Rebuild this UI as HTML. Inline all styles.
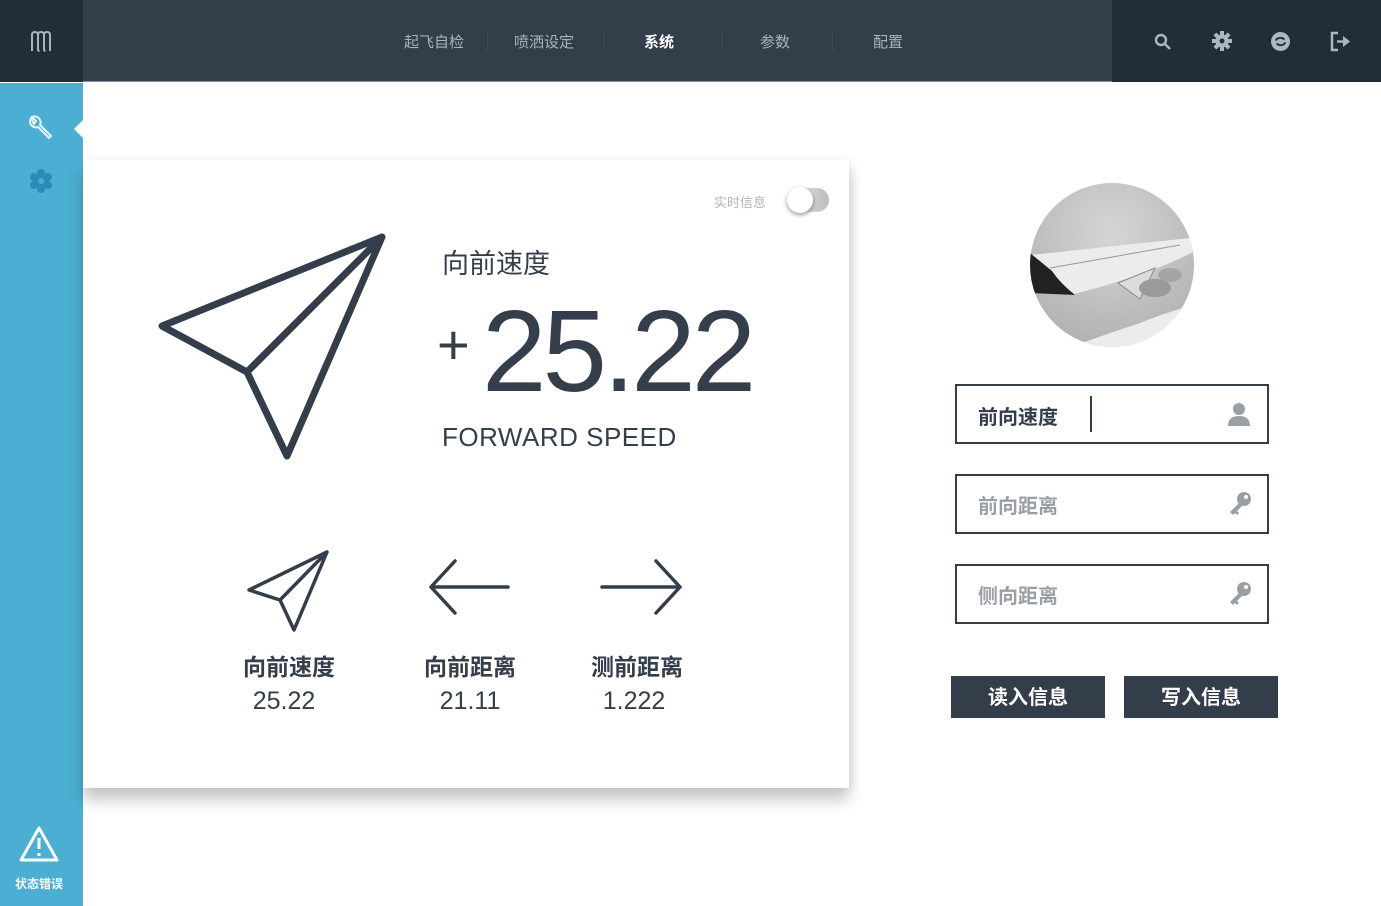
<!DOCTYPE html>
<html><head><meta charset="utf-8"><style>
*{margin:0;padding:0;box-sizing:border-box}
body{width:1381px;height:906px;background:#fff;position:relative;overflow:hidden;font-family:"Liberation Sans","Noto Sans CJK SC",sans-serif;color:#343f4b}
.abs{position:absolute}
#top{left:0;top:0;width:1381px;height:82px;background:#343e4b;border-bottom:1px solid #8a949e}
#logo{left:0;top:0;width:83px;height:82px;background:#232d39}
#rt{left:1112px;top:0;width:269px;height:82px;background:#232d39}
.nav{top:31px;font-size:15px;color:#a9b3bb}
.sep{top:31px;width:1px;height:20px;background:#3f4a57}
#side{left:0;top:83px;width:83px;height:823px;background:#4bafd3}
#card{left:83px;top:160px;width:766px;height:628px;background:#fff;box-shadow:0 12px 14px rgba(0,0,0,.22),4px 0 8px rgba(0,0,0,.05)}
.inp{left:955px;width:314px;height:60px;border:2px solid #343e4b;background:#fff}
.inp span{position:absolute;left:21px;top:14px;font-size:20px;color:#9a9fa5;font-weight:bold}
.btn{top:676px;width:154px;height:42px;background:#343e4b;color:#fff;font-size:20px;font-weight:bold;text-align:center;line-height:44px}
.lbl{font-size:23px;font-weight:bold;text-align:center;width:130px;color:#343f4b}
.val{font-size:25px;text-align:center;width:130px;color:#343f4b}
</style></head><body>
<div id="top" class="abs"></div>
<div id="logo" class="abs"><svg class="abs" style="left:30px;top:30px" width="22" height="22" viewBox="0 0 22 22" fill="none" stroke="#a9b3bb" stroke-width="2"><path d="M2 21V5q0-3 3-3t3 3v14q0 2 1.5 2M8 5q0-3 3-3t3 3v14q0 2 1.5 2M14 5q0-3 3-3t3 3v16"/></svg></div>
<div id="rt" class="abs">
<svg class="abs" style="left:42px;top:33px" width="18" height="18" viewBox="0 0 18 18" fill="none" stroke="#a9b8c2" stroke-width="2.4"><circle cx="7" cy="7" r="5"/><path d="M10.5 10.5L16 16"/></svg>
<svg class="abs" style="left:100px;top:31px" width="20" height="20" viewBox="-10 -10 20 20"><g fill="#a9b8c2"><circle r="6.5"/><rect x="-2" y="-10" width="4" height="20"/><rect x="-2" y="-10" width="4" height="20" transform="rotate(45)"/><rect x="-2" y="-10" width="4" height="20" transform="rotate(90)"/><rect x="-2" y="-10" width="4" height="20" transform="rotate(135)"/></g><circle r="2.5" fill="#232d39"/></svg>
<svg class="abs" style="left:159px;top:32px" width="19" height="19" viewBox="0 0 20 20"><circle cx="10" cy="10" r="10" fill="#a9b8c2"/><path d="M5 9a5 4 0 0 1 9-1M15 11a5 4 0 0 1-9 1" fill="none" stroke="#232d39" stroke-width="2"/></svg>
<svg class="abs" style="left:218px;top:31px" width="22" height="21" viewBox="0 0 22 21" fill="none" stroke="#a9b8c2" stroke-width="2.4"><path d="M8 2H2v17h6"/><path d="M7 10.5h9" /><path d="M13 5l7 5.5-7 5.5z" fill="#a9b8c2" stroke="none"/></svg>
</div>
<div class="abs nav" style="left:404px">起飞自检</div>
<div class="abs sep" style="left:487px"></div>
<div class="abs nav" style="left:514px">喷洒设定</div>
<div class="abs sep" style="left:604px"></div>
<div class="abs nav" style="left:644px;color:#fff;font-weight:bold">系统</div>
<div class="abs sep" style="left:722px"></div>
<div class="abs nav" style="left:760px">参数</div>
<div class="abs sep" style="left:832px"></div>
<div class="abs nav" style="left:873px">配置</div>

<div id="side" class="abs">
<svg class="abs" style="left:27px;top:32px" width="26" height="26" viewBox="0 0 26 26"><path d="M4 3a6 6 0 0 0 7 9l11 11 2-2-11-11a6 6 0 0 0-8-8l4 4-2 3z" fill="none" stroke="#e6f4fa" stroke-width="2"/></svg>
<div class="abs" style="left:74px;top:37px;width:0;height:0;border-top:9px solid transparent;border-bottom:9px solid transparent;border-right:9px solid #fff"></div>
<svg class="abs" style="left:29px;top:86px" width="24" height="24" viewBox="-12 -12 24 24"><g fill="#2a8db5"><circle r="8"/><circle cy="-8" r="4"/><circle cy="8" r="4"/><circle cx="-7" cy="-4" r="4"/><circle cx="7" cy="-4" r="4"/><circle cx="-7" cy="4" r="4"/><circle cx="7" cy="4" r="4"/></g><circle r="3" fill="#4bafd3"/></svg>
<svg class="abs" style="left:18px;top:742px" width="42" height="38" viewBox="0 0 42 38" fill="none" stroke="#fff" stroke-width="3" stroke-linejoin="round"><path d="M21 3L39 35H3z"/><path d="M21 13v11M21 28v3"/></svg>
<div class="abs" style="left:0;top:792px;width:78px;text-align:center;font-size:12px;color:#fff;font-weight:bold">状态错误</div>
</div>

<div id="card" class="abs">
<div class="abs" style="left:631px;top:32px;font-size:13px;color:#b5b5b5">实时信息</div>
<div class="abs" style="left:705px;top:28px;width:41px;height:24px;border-radius:12px;background:linear-gradient(90deg,#eee,#bbb)"></div>
<div class="abs" style="left:704px;top:27px;width:26px;height:26px;border-radius:13px;background:#fff;box-shadow:0 2px 5px rgba(0,0,0,.4)"></div>
<svg class="abs" style="left:0;top:0" width="766" height="628" viewBox="83 160 766 628" fill="none" stroke="#343e4b" stroke-linejoin="round" stroke-linecap="round">
<path d="M162 326L382 237 287 456 247 372Z M247 372L382 237" stroke-width="7"/>
<path d="M249 590L327 552 294 630 280 600Z M280 600L327 552" stroke-width="3.5"/>
<path d="M508 587H431M455 561L431 587 455 613" stroke-width="3.5"/>
<path d="M602 587H680M656 561L680 587 656 613" stroke-width="3.5"/>
</svg>
<div class="abs" style="left:359px;top:82px;font-size:27px">向前速度</div>
<div class="abs" style="left:354px;top:152px;font-size:56px;font-weight:300">+</div>
<div class="abs" style="left:399px;top:128px;font-size:116px;letter-spacing:-4px;line-height:1.1">25.22</div>
<div class="abs" style="left:359px;top:262px;font-size:26px;letter-spacing:0.5px">FORWARD SPEED</div>
<div class="abs lbl" style="left:141px;top:488px">向前速度</div>
<div class="abs val" style="left:136px;top:527px">25.22</div>
<div class="abs lbl" style="left:322px;top:488px">向前距离</div>
<div class="abs val" style="left:322px;top:527px">21.11</div>
<div class="abs lbl" style="left:489px;top:488px">测前距离</div>
<div class="abs val" style="left:486px;top:527px">1.222</div>
</div>

<div class="abs" style="left:1030px;top:183px;width:164px;height:164px;border-radius:50%;overflow:hidden;background:radial-gradient(circle at 50% 30%,#d6d6d6,#b0b0b0 85%)">
<svg width="164" height="164" viewBox="0 0 164 164"><path d="M0 72L160 55 165 68Q120 92 40 112L0 108Z" fill="#ececec"/><path d="M0 70L22 88Q30 100 45 112L0 110Z" fill="#222"/><path d="M20 85L150 62" stroke="#999" stroke-width="1"/><path d="M88 100L125 85 110 116Z" fill="#dcdcdc" stroke="#888"/><ellipse cx="125" cy="105" rx="16" ry="9" fill="#9a9a9a"/><ellipse cx="140" cy="92" rx="12" ry="7" fill="#a5a5a5"/><path d="M40 164Q80 150 110 140Q140 128 164 122V164Z" fill="#ececec"/></svg>
</div>

<div class="abs inp" style="top:384px"><span style="color:#343e4b;top:15px">前向速度</span><div class="abs" style="left:133px;top:10px;width:2px;height:36px;background:#343e4b"></div>
<svg class="abs" style="left:269px;top:15px" width="26" height="26" viewBox="0 0 26 26" fill="#9a9fa5"><circle cx="13" cy="8" r="6"/><path d="M2 25q0-10 11-10t11 10z"/></svg></div>
<div class="abs inp" style="top:474px"><span>前向距离</span>
<svg class="abs" style="left:270px;top:15px" width="26" height="26" viewBox="0 0 26 26" fill="#9a9fa5"><circle cx="17" cy="8" r="7"/><path d="M13 11L3 21l3 3 2-2 2 2 2-2-2-2 5-5z"/><circle cx="19" cy="6" r="2" fill="#fff"/></svg></div>
<div class="abs inp" style="top:564px"><span>侧向距离</span>
<svg class="abs" style="left:270px;top:15px" width="26" height="26" viewBox="0 0 26 26" fill="#9a9fa5"><circle cx="17" cy="8" r="7"/><path d="M13 11L3 21l3 3 2-2 2 2 2-2-2-2 5-5z"/><circle cx="19" cy="6" r="2" fill="#fff"/></svg></div>
<div class="abs btn" style="left:951px">读入信息</div>
<div class="abs btn" style="left:1124px">写入信息</div>
</body></html>
